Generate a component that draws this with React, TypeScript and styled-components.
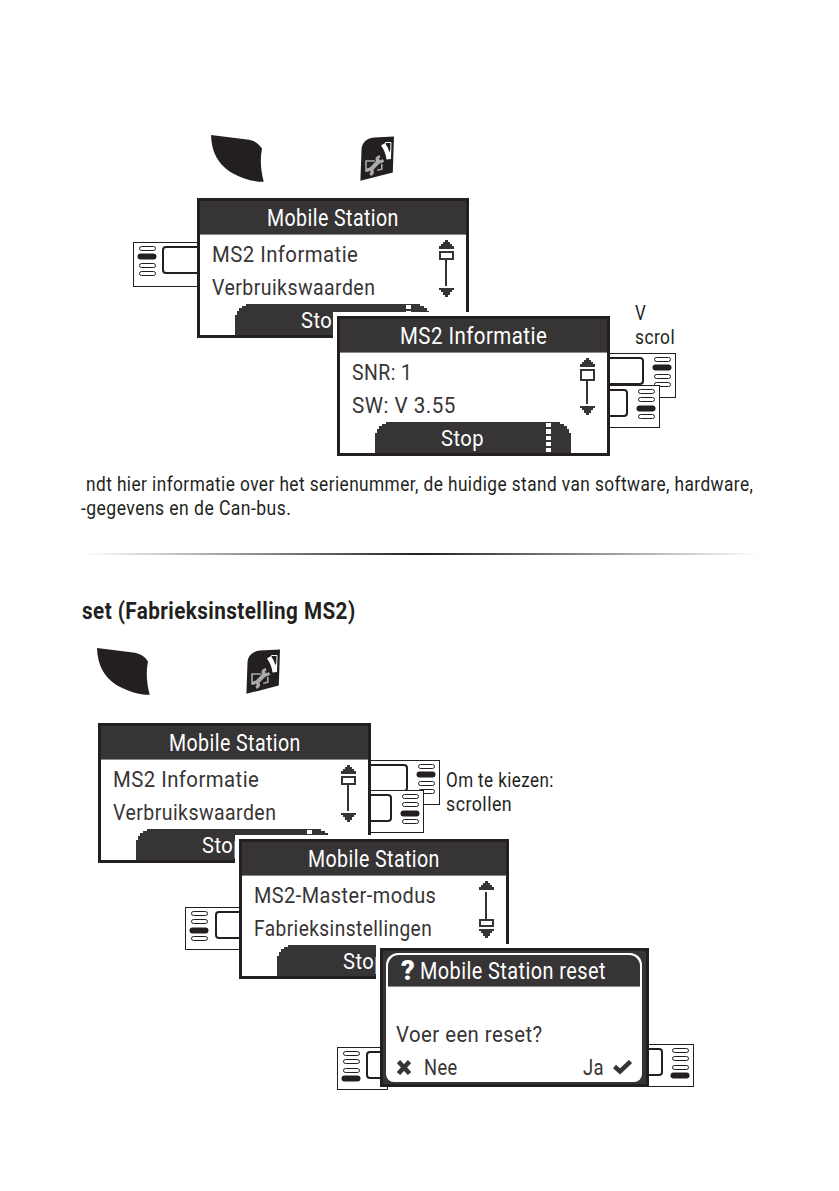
import React, { useLayoutEffect, useRef, useState } from 'react';
import styled, { createGlobalStyle } from 'styled-components';

const INK = '#231f20';
const LCD = '#373435';

interface FitProps {
    width: number;
    children: string;
}

// Condenses a line of text to the given width.
const Fit: React.FC<FitProps> = ({ width, children }) => {
    const ref = useRef<HTMLSpanElement>(null);
    const [scale, setScale] = useState(1);

    useLayoutEffect(() => {
        if (ref.current) {
            setScale(width / ref.current.offsetWidth);
        }
    }, [width, children]);

    return (
        <FitBox $width={width}>
            <FitText ref={ref} style={{ transform: `scaleX(${scale})` }}>{children}</FitText>
        </FitBox>
    );
};

interface SoftkeyProps {
    width: number;
    height?: number;
    drop?: number;
    gap?: number;
    active: number;
    side: 'left' | 'right';
}

const Softkey: React.FC<SoftkeyProps> = ({ width, height = 43, drop = 0, gap = 9, active, side }) => (
    <KeyPlate $width={width} $height={height} $drop={drop} $gap={gap} $side={side}>
        <Leds>
            {[0, 1, 2, 3].map((i) => <Led key={i} $on={i === active} />)}
        </Leds>
        <KeyCap $side={side} />
    </KeyPlate>
);

interface ScrollbarProps {
    thumb?: 'top' | 'bottom';
    thumbHeight?: number;
}

const Scrollbar: React.FC<ScrollbarProps> = ({ thumb = 'top', thumbHeight = 9 }) => (
    <ScrollTrack>
        <svg width="15" height="58" viewBox="0 0 15 58" shapeRendering="crispEdges">
            <path fill={LCD} d="M6 0h3v2h2v2h2v2h2v3H0V6h2V4h2V2h2z" />
            <path fill={LCD} d="M0 48h15v2h-2v2h-2v3H9v2H6v-2H4v-3H2v-2H0z" />
            {thumb === 'top' ? (
                <>
                    <path fill={LCD} d={`M6 ${11 + thumbHeight}h2V46h-2z`} />
                    <rect x="1" y="12" width="13" height={thumbHeight - 2} fill="#fff" stroke={LCD} strokeWidth="2" />
                </>
            ) : (
                <>
                    <path fill={LCD} d="M6 11h2V38h-2z" />
                    <rect x="1" y="39" width="13" height="6" fill="#fff" stroke={LCD} strokeWidth="2" />
                </>
            )}
        </svg>
    </ScrollTrack>
);

interface Line {
    text: string;
    width: number;
}

interface DisplayProps extends ScrollbarProps {
    width: number;
    title: Line;
    rows: Line[];
}

const Display: React.FC<DisplayProps> = ({ width, title, rows, thumb, thumbHeight }) => (
    <Screen $width={width} $height={140}>
        <TitleBar><Fit width={title.width}>{title.text}</Fit></TitleBar>
        <ScreenBody>
            <Rows>
                {rows.map((row) => <Fit key={row.text} width={row.width}>{row.text}</Fit>)}
            </Rows>
            <Scrollbar thumb={thumb} thumbHeight={thumbHeight} />
        </ScreenBody>
        <StopTab>
            <Fit width={43}>Stop</Fit>
            <Dots>
                {[0, 1, 2, 3, 4].map((i) => <Dot key={i} />)}
            </Dots>
        </StopTab>
    </Screen>
);

const ControlKeys: React.FC = () => (
    <KeyRow>
        <svg width="53" height="47" viewBox="0 0 53 47">
            <path fill={INK} d="M0 0L38 4.8C44 6 48 9 51 13.5C49 24 49.5 34 52.7 46.8C43 47 32 44 19 36.7C7 28.5 .5 17 0 0z" />
        </svg>
        <svg width="35" height="46" viewBox="0 0 35 46">
            <path fill={INK} d="M34 .4L14 1.6C6 2.5 1.7 7 1.5 14L.4 44.8L32.8 36.6z" />
            <path fill="none" stroke="#fff" d="M25.5 7.5V6.5H31L30.5 22" />
            <path fill="#fff" d="M21 9.500L25 7q3.500 5 4.300 9L31 13.500V23l-4.500.5Q25.500 15.500 21 9.500z" />
            <path fill="none" stroke="#aaa" strokeWidth="1.600" d="M15 25H6v10h2.500M21.800 28v5.200l-4.500 1" />
            <path fill="none" stroke="#aaa" strokeWidth="4" d="M9.800 34.500L20 24" />
            <path fill="none" stroke="#aaa" strokeWidth="3.200" d="M20 20.500q-4 1-2.500 4t6-.2M6.500 34.500q4-2.500 5.500 0t-2 4" />
        </svg>
    </KeyRow>
);

const App: React.FC = () => (
    <Page>
        <GlobalStyle />
        <ControlFigure>
            <ControlKeys />
            <Cascade>
                <Unit $indent={133}>
                    <Softkey width={72} height={45} drop={44} gap={6} active={1} side="left" />
                    <Display
                        width={272}
                        title={{ text: 'Mobile Station', width: 132 }}
                        rows={[{ text: 'MS2 Informatie', width: 146 }, { text: 'Verbruikswaarden', width: 163 }]}
                    />
                </Unit>
                <Unit $indent={337} $overlap={22}>
                    <Display
                        width={273}
                        title={{ text: 'MS2 Informatie', width: 147 }}
                        rows={[{ text: 'SNR: 1', width: 60 }, { text: 'SW: V 3.55', width: 104 }]}
                        thumbHeight={12}
                    />
                    <CaptionedKeys>
                        <Caption>
                            <Fit width={11}>V</Fit>
                            <Fit width={40}>scrol</Fit>
                        </Caption>
                        <KeyStack $overlap={13}>
                            <Softkey width={74} height={45} active={1} side="right" />
                            <Softkey width={58} active={2} side="right" />
                        </KeyStack>
                    </CaptionedKeys>
                </Unit>
            </Cascade>
        </ControlFigure>

        <Paragraph>
            <Indent><Fit width={667}>ndt hier informatie over het serienummer, de huidige stand van software, hardware,</Fit></Indent>
            <Fit width={210}>-gegevens en de Can-bus.</Fit>
        </Paragraph>
        <Divider />
        <Heading><Fit width={274}>set (Fabrieksinstelling MS2)</Fit></Heading>

        <ResetFigure>
            <ControlKeys />
            <Cascade>
                <Unit $indent={98}>
                    <Display
                        width={273}
                        title={{ text: 'Mobile Station', width: 132 }}
                        rows={[{ text: 'MS2 Informatie', width: 146 }, { text: 'Verbruikswaarden', width: 163 }]}
                    />
                    <SideKeys>
                        <KeyStack $overlap={15}>
                            <Softkey width={77} height={45} active={1} side="right" />
                            <Softkey width={61} active={2} side="right" />
                        </KeyStack>
                        <SideCaption>
                            <Fit width={108}>Om te kiezen:</Fit>
                            <Fit width={66}>scrollen</Fit>
                        </SideCaption>
                    </SideKeys>
                </Unit>
                <Unit $indent={185} $overlap={24}>
                    <Softkey width={62} drop={68} gap={7} active={2} side="left" />
                    <Display
                        width={270}
                        title={{ text: 'Mobile Station', width: 132 }}
                        rows={[{ text: 'MS2-Master-modus', width: 182 }, { text: 'Fabrieksinstellingen', width: 178 }]}
                        thumb="bottom"
                    />
                </Unit>
                <Unit $indent={337} $overlap={31}>
                    <Softkey width={51} drop={99} gap={6} active={3} side="left" />
                    <Screen $width={269} $height={139} $dark>
                        <Dialog>
                            <DialogTitle>
                                <Question>?</Question>
                                <Fit width={186}>Mobile Station reset</Fit>
                            </DialogTitle>
                            <DialogText><Fit width={147}>Voer een reset?</Fit></DialogText>
                            <DialogActions>
                                <Action $gap={13}>
                                    <svg width="14" height="15" viewBox="0 0 14 15">
                                        <path fill="none" stroke={LCD} strokeWidth="4.500" d="M1.500 1.500L12.500 13.500M12.500 1.500L1.500 13.500" />
                                    </svg>
                                    <Fit width={34}>Nee</Fit>
                                </Action>
                                <Action $gap={9}>
                                    <Fit width={21}>Ja</Fit>
                                    <svg width="19" height="15" viewBox="0 0 19 15">
                                        <path fill="none" stroke={LCD} strokeWidth="4.500" d="M1.500 6.500L7 11.500L17.500 1.500" />
                                    </svg>
                                </Action>
                            </DialogActions>
                        </Dialog>
                    </Screen>
                    <Softkey width={53} drop={96} gap={8} active={3} side="right" />
                </Unit>
            </Cascade>
        </ResetFigure>
    </Page>
);

const GlobalStyle = createGlobalStyle`
  * {
    box-sizing: border-box;
  }

  body {
    margin: 0;
    background: #fff;
  }

  svg {
    display: block;
    flex: none;
  }
`;

const Page = styled.main`
  display: flex;
  flex-direction: column;
  width: 839px;
  height: 1191px;
  overflow: hidden;
  background: #fff;
  color: ${INK};
  font-family: Roboto, 'Liberation Sans', sans-serif;
  letter-spacing: 0.5px;
`;

const FitBox = styled.div<{ $width: number }>`
  flex: none;
  width: ${(p) => p.$width}px;
  white-space: nowrap;
`;

const FitText = styled.span`
  display: inline-block;
  vertical-align: top;
  transform-origin: left center;
`;

const KeyRow = styled.div`
  display: flex;
  align-items: center;
  gap: 96px;
  height: 47px;
`;

const Figure = styled.section`
  display: flex;
  flex-direction: column;
`;

const ControlFigure = styled(Figure)`
  gap: 16px;
  padding: 135px 0 16px;

  ${KeyRow} {
    padding-left: 211px;
  }
`;

const ResetFigure = styled(Figure)`
  gap: 28px;
  padding-top: 23px;

  ${KeyRow} {
    padding-left: 97px;
  }
`;

const Cascade = styled.div`
  display: flex;
  flex-direction: column;
`;

// One screen with its softkeys; it overlaps the unit above it.
const Unit = styled.div<{ $indent: number; $overlap?: number }>`
  display: flex;
  align-items: flex-start;
  height: 140px;
  margin-top: -${(p) => p.$overlap ?? 0}px;
  padding-left: ${(p) => p.$indent}px;
  isolation: isolate;
`;

const KeyPlate = styled.div<{
    $width: number; $height: number; $drop: number; $gap: number; $side: string;
}>`
  display: flex;
  flex: none;
  flex-direction: ${(p) => (p.$side === 'left' ? 'row' : 'row-reverse')};
  align-items: flex-start;
  gap: ${(p) => p.$gap}px;
  width: ${(p) => p.$width}px;
  height: ${(p) => p.$height}px;
  margin: ${(p) => (p.$side === 'left' ? `${p.$drop}px -8px 0 0` : `${p.$drop}px 0 0 -8px`)};
  padding: ${(p) => (p.$side === 'left' ? '3px 0 0 4px' : '3px 4px 0 0')};
  border: 1px solid ${INK};
  background: #fff;
`;

const KeyStack = styled.div<{ $overlap: number }>`
  display: flex;
  flex-direction: column;
  align-items: flex-start;

  ${KeyPlate} + ${KeyPlate} {
    margin-top: -${(p) => p.$overlap}px;
  }
`;

const CaptionedKeys = styled.div`
  display: flex;
  flex-direction: column;
  gap: 4px;
  margin-top: -15px;
`;

const SideKeys = styled.div`
  display: flex;
  gap: 6px;
  padding-top: 37px;
`;

const Caption = styled.div`
  padding-left: 25px;
  font-size: 20px;
  line-height: 24px;
`;

const SideCaption = styled(Caption)`
  padding: 8px 0 0;
`;

const Leds = styled.div`
  display: flex;
  flex-direction: column;
  align-items: center;
  gap: 3.3px;
  width: 18px;
`;

const Led = styled.span<{ $on: boolean }>`
  width: ${(p) => (p.$on ? 18 : 17)}px;
  height: 5px;
  border: 1px solid ${INK};
  border-radius: 3px;
  background: ${(p) => (p.$on ? INK : '#fff')};
  box-shadow: ${(p) => (p.$on ? `0 0 0 0.5px ${INK}` : 'none')};
`;

const KeyCap = styled.div<{ $side: string }>`
  flex: 1;
  height: 28px;
  border: 2px solid ${INK};
  border-radius: ${(p) => (p.$side === 'left' ? '4px 0 0 4px' : '0 4px 4px 0')};
  background: #fff;
`;

const Screen = styled.div<{ $width: number; $height: number; $dark?: boolean }>`
  position: relative;
  flex: none;
  width: ${(p) => p.$width}px;
  height: ${(p) => p.$height}px;
  border: 3px solid ${INK};
  background: ${(p) => (p.$dark ? LCD : '#fff')};
  color: ${LCD};
  font-size: 22px;

  /* white edge towards the screen behind, below the softkeys */
  &::before {
    content: '';
    position: absolute;
    z-index: -1;
    inset: -7px 0 0 -7px;
    background: #fff;
  }
`;

const TitleBar = styled.div`
  display: flex;
  justify-content: center;
  height: 34px;
  border-bottom: 1px solid #8a8889;
  background: ${LCD};
  color: #fff;
  font-size: 23px;
  line-height: 36px;
`;

const ScreenBody = styled.div`
  display: flex;
  justify-content: space-between;
  height: 69px;
  padding: 3px 12px 0 12px;
`;

const Rows = styled.div`
  display: flex;
  flex-direction: column;
  line-height: 33px;
`;

const ScrollTrack = styled.div`
  padding-top: 2px;
`;

const StopTab = styled.div`
  display: flex;
  justify-content: space-between;
  width: 196px;
  height: 31px;
  margin-left: 35px;
  padding: 0 20px 0 66px;
  background: ${LCD};
  color: #fff;
  line-height: 34px;
  clip-path: polygon(
    0 100%, 0 11px, 2px 11px, 2px 7px, 4px 7px, 4px 4px, 7px 4px, 7px 2px, 11px 2px, 11px 0,
    185px 0, 185px 2px, 189px 2px, 189px 4px, 192px 4px, 192px 7px, 194px 7px, 194px 11px, 196px 11px, 196px 100%
  );
`;

const Dots = styled.div`
  display: flex;
  flex-direction: column;
  gap: 2px;
  padding-top: 1px;
`;

const Dot = styled.span`
  width: 5px;
  height: 4.3px;
  background: #fff;
`;

const Dialog = styled.div`
  display: flex;
  flex-direction: column;
  width: 256px;
  height: 129px;
  margin: 2px 0 0 3px;
  padding: 2px 2px 0 2px;
  border-radius: 12px 12px 8px 8px;
  background: #fff;
`;

const DialogTitle = styled.div`
  display: flex;
  gap: 4px;
  height: 32px;
  padding-left: 13px;
  border-bottom: 1px solid #8a8889;
  border-radius: 11px 11px 0 0;
  background: ${LCD};
  color: #fff;
  font-size: 23px;
  line-height: 33px;
`;

const Question = styled.span`
  width: 15px;
  font-size: 27px;
  font-weight: 900;
`;

const DialogText = styled.div`
  padding: 31px 0 0 8px;
  line-height: 33px;
`;

const DialogActions = styled.div`
  display: flex;
  justify-content: space-between;
  padding: 0 8px 0 9px;
  line-height: 33px;
`;

const Action = styled.div<{ $gap: number }>`
  display: flex;
  align-items: center;
  gap: ${(p) => p.$gap}px;
  height: 33px;
`;

const Paragraph = styled.div`
  padding-left: 81px;
  font-size: 20px;
  line-height: 24px;
`;

const Indent = styled.div`
  padding-left: 5px;
`;

const Divider = styled.hr`
  width: 676px;
  height: 2px;
  margin: 33px 0 40px 84px;
  border: 0;
  background: linear-gradient(to right, #fff, ${INK} 50%, #fff);
`;

const Heading = styled.h2`
  height: 30px;
  margin: 0 0 0 82px;
  font-size: 24px;
  font-weight: 700;
  line-height: 33px;
`;

export default App;
